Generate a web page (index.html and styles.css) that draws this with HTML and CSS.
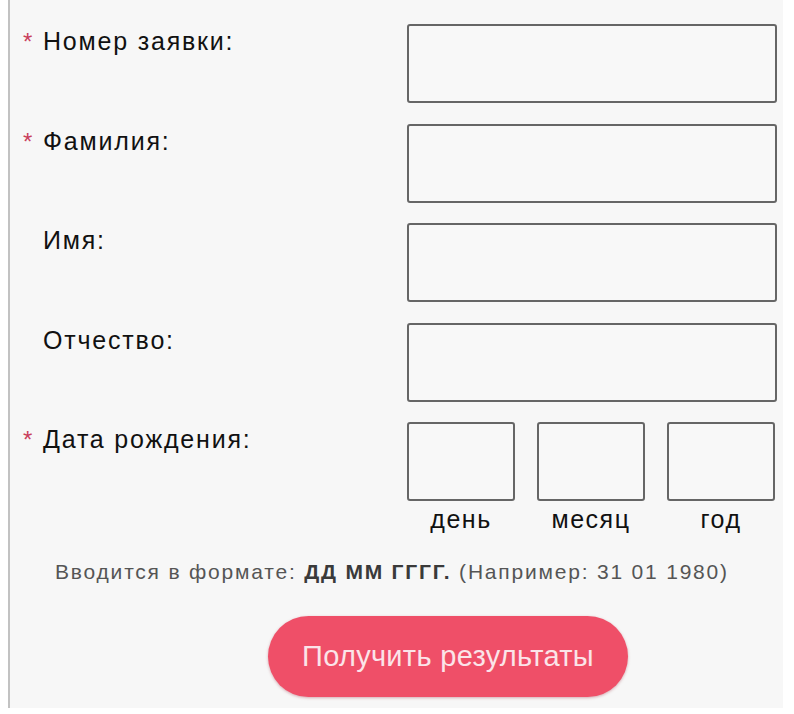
FILE: index.html
```html
<!DOCTYPE html>

<html>

<head>
    <meta charset="utf-8">
    <title>Результаты</title>
    <link rel="stylesheet" href="styles.css">
</head>

<body>
    <div class="page">
        <form class="lookup-form">
            <div class="form-row">
                <label class="field-label" for="request"><span class="required">*</span>Номер заявки:</label>
                <input class="field-input" id="request" type="text">
            </div>

            <div class="form-row">
                <label class="field-label" for="surname"><span class="required">*</span>Фамилия:</label>
                <input class="field-input" id="surname" type="text">
            </div>

            <div class="form-row">
                <label class="field-label" for="name"><span class="required"></span>Имя:</label>
                <input class="field-input" id="name" type="text">
            </div>

            <div class="form-row">
                <label class="field-label" for="patronymic"><span class="required"></span>Отчество:</label>
                <input class="field-input" id="patronymic" type="text">
            </div>

            <div class="form-row">
                <label class="field-label" for="day"><span class="required">*</span>Дата рождения:</label>
                <div class="date-fields">
                    <div class="date-part">
                        <input class="field-input date-input" id="day" type="text">
                        <span class="date-caption">день</span>
                    </div>
                    <div class="date-part">
                        <input class="field-input date-input" id="month" type="text">
                        <span class="date-caption">месяц</span>
                    </div>
                    <div class="date-part">
                        <input class="field-input date-input" id="year" type="text">
                        <span class="date-caption">год</span>
                    </div>
                </div>
            </div>

            <p class="format-hint">Вводится в формате: <b>ДД ММ ГГГГ.</b> (Например: 31 01 1980)</p>

            <div class="form-actions">
                <button class="submit-button" type="button">Получить результаты</button>
            </div>
        </form>
    </div>
</body>

</html>
```

FILE: styles.css
```css
body {
    margin: 0;
    background-color: #ffffff;
    font-family: "Liberation Sans", Arial, sans-serif;
    color: #111111;
}

.page {
    margin-left: 8px;
    width: 773px;
    height: 708px;
    border-left: 2px solid #c2c2c2;
    background-color: #f7f7f7;
}

.lookup-form {
    padding-top: 24px;
}

.form-row {
    display: flex;
    margin-bottom: 20.5px;
}

.field-label {
    box-sizing: border-box;
    width: 397px;
    padding-left: 13px;
    padding-top: 3px;
    font-size: 25px;
    line-height: 29px;
    letter-spacing: 1.8px;
}

.required {
    display: inline-block;
    width: 20px;
    font-size: 24px;
    line-height: 20px;
    vertical-align: top;
    padding-top: 5px;
    color: #c9405c;
    letter-spacing: 0;
}

.field-input {
    box-sizing: border-box;
    width: 370px;
    height: 79px;
    margin: 0;
    border: 2px solid #666666;
    border-radius: 3px;
    background-color: #f8f8f8;
    outline: none;
}

.date-fields {
    display: flex;
    gap: 22px;
}

.date-part {
    display: flex;
    flex-direction: column;
    align-items: center;
}

.date-input {
    width: 108px;
}

.date-caption {
    margin-top: 4px;
    font-size: 25px;
    line-height: 29px;
    letter-spacing: 1.5px;
}

.format-hint {
    margin: 0;
    padding-top: 5px;
    padding-left: 45px;
    font-size: 21px;
    line-height: 24px;
    letter-spacing: 1.8px;
    color: #555555;
}

.format-hint b {
    color: #3a3a3a;
}

.form-actions {
    padding-left: 258px;
    margin-top: 32px;
}

.submit-button {
    width: 360px;
    height: 81px;
    border: none;
    border-radius: 41px;
    background-color: #ef4f68;
    box-shadow: 0 1px 3px rgba(150, 30, 50, 0.35);
    color: #fbe4e9;
    font-family: "Liberation Sans", Arial, sans-serif;
    font-size: 29px;
    letter-spacing: 0.3px;
    cursor: pointer;
}
```
